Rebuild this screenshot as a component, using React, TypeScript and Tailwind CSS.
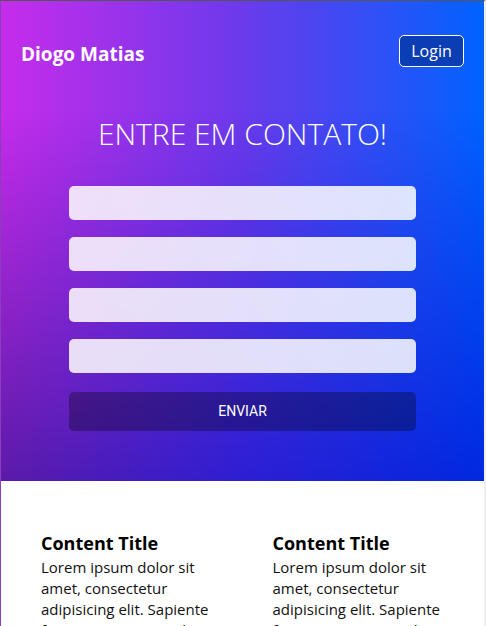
import React from 'react';

const items = [
  { title: 'Content Title', text: 'Lorem ipsum dolor sit amet, consectetur adipisicing elit. Sapiente facere quas rerum ab nulla velit, dolores illo fugit quisquam.' },
  { title: 'Content Title', text: 'Lorem ipsum dolor sit amet, consectetur adipisicing elit. Sapiente facere quas rerum ab nulla velit, dolores illo fugit quisquam.' },
];

export default function App() {
  return (
    <div className="h-[626px] overflow-hidden border-t border-t-[#555555] border-l border-l-[#8b3cbf] border-r-2 border-r-[#efefef] bg-white font-['Open_Sans','Noto_Sans',sans-serif]">
      {/* Hero: top row gradient, with the darker bottom row faded in by a mask */}
      <section className="relative isolate flex h-[480px] flex-col bg-[linear-gradient(to_right,#c62ceb,#6b3aeb_50%,#0062ff)] before:absolute before:inset-0 before:-z-10 before:bg-[linear-gradient(to_right,#5b1aa8,#2d1ed2_50%,#0028e0)] before:[mask-image:linear-gradient(to_bottom,transparent_23%,black)]">
        <nav className="flex h-[66px] items-start justify-between px-5 pt-[34px]">
          <span className="mt-[6px] text-[19px] leading-[26px] font-bold text-white">Diogo Matias</span>
          <button className="h-8 w-[65px] rounded-[5px] border border-white bg-[#0b3db4] text-base text-white">
            Login
          </button>
        </nav>

        <h1 className="mt-[47px] text-center text-[30px] leading-[40px] font-light text-white">
          ENTRE EM CONTATO!
        </h1>

        <form className="mx-auto mt-[32px] flex w-[347px] flex-col gap-[17px]">
          <input className="h-[34px] rounded-[5px] bg-white/85 px-3 outline-none" />
          <input className="h-[34px] rounded-[5px] bg-white/85 px-3 outline-none" />
          <input className="h-[34px] rounded-[5px] bg-white/85 px-3 outline-none" />
          <input className="h-[34px] rounded-[5px] bg-white/85 px-3 outline-none" />
          <button
            type="button"
            className="mt-[2px] h-[39px] rounded-[5px] bg-black/30 font-['Roboto',sans-serif] text-[14px] text-white"
          >
            ENVIAR
          </button>
        </form>
      </section>

      {/* Content */}
      <section className="grid grid-cols-2 gap-x-[60px] px-10 pt-[50px]">
        {items.map((item, i) => (
          <div key={i}>
            <h2 className="text-[18px] font-bold leading-[24px] text-black">{item.title}</h2>
            <p className="mt-[2px] text-[15px] leading-[21px] text-[#111]">{item.text}</p>
          </div>
        ))}
      </section>
    </div>
  );
}
